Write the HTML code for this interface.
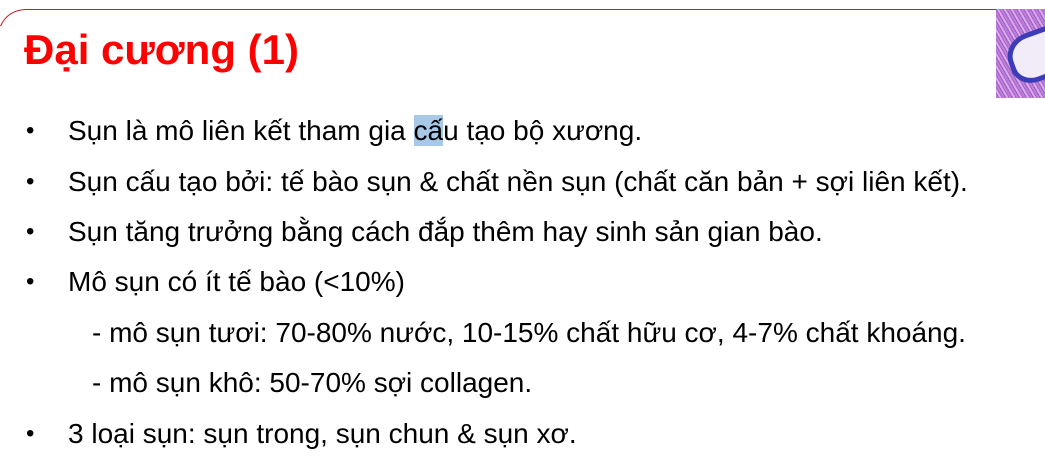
<!DOCTYPE html>
<html><head><meta charset="utf-8"><style>
html,body{margin:0;padding:0;width:1045px;height:475px;background:#fff;overflow:hidden;position:relative;font-family:"Liberation Sans",Arial,sans-serif}
.t{position:absolute;left:24px;top:25px;font-size:42px;font-weight:bold;color:#f00;line-height:50px;white-space:nowrap}
.l{position:absolute;font-size:28px;color:#000;line-height:30px;white-space:nowrap}
.b{position:absolute;left:26px;font-size:24px;line-height:30px}
.img{position:absolute;left:996px;top:9px;width:49px;height:89px;overflow:hidden;background:
repeating-linear-gradient(60deg,#c57ad6 0 2px,#8a62cc 2px 3px,#e0a8e6 3px 5px,#9a6ad0 5px 6px),#c080d8}
.blob{position:absolute;left:12px;top:22px;width:46px;height:40px;border-radius:45% 10% 50% 40%;background:#f2ecf8;border:5px solid #3c3cb8;transform:rotate(-20deg)}
</style></head><body>
<svg width="1045" height="60" style="position:absolute;left:0;top:0">
<path d="M0.5 26 Q8 10 26 9.5 L996 9.5" fill="none" stroke="#b22" stroke-width="1"/>
</svg>
<div class="img"><div class="blob"></div></div>
<div class="t">Đại cương (1)</div>
<div class="b" style="top:116px">•</div><div class="l" style="left:68px;top:116px">Sụn là mô liên kết tham gia <span style="background:#a8c8e8">cấ</span>u tạo bộ xương.</div>
<div class="b" style="top:167px">•</div><div class="l" style="left:68px;top:167px">Sụn cấu tạo bởi: tế bào sụn &amp; chất nền sụn (chất căn bản + sợi liên kết).</div>
<div class="b" style="top:217px">•</div><div class="l" style="left:68px;top:217px">Sụn tăng trưởng bằng cách đắp thêm hay sinh sản gian bào.</div>
<div class="b" style="top:267px">•</div><div class="l" style="left:68px;top:267px">Mô sụn có ít tế bào (&lt;10%)</div>
<div class="l" style="left:92px;top:318px">- mô sụn tươi: 70-80% nước, 10-15% chất hữu cơ, 4-7% chất khoáng.</div>
<div class="l" style="left:92px;top:368px">- mô sụn khô: 50-70% sợi collagen.</div>
<div class="b" style="top:419px">•</div><div class="l" style="left:68px;top:419px">3 loại sụn: sụn trong, sụn chun &amp; sụn xơ.</div>
</body></html>
